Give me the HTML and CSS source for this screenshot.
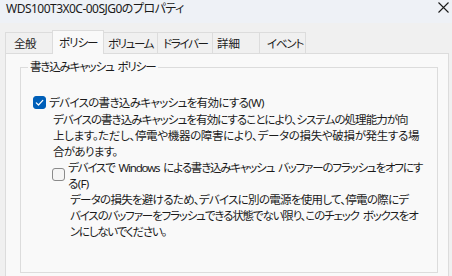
FILE: index.html
```html
<!DOCTYPE html>
<html lang="ja">
<head>
<meta charset="utf-8">
<link rel="stylesheet" href="styles.css">
</head>
<body>
<div class="window">
  <div class="titlebar">
    <span class="title">WDS100T3X0C-00SJG0のプロパティ</span>
    <svg class="close" width="11" height="11" viewBox="0 0 11 11"><path d="M0.5 0.5L10.5 10.5M10.5 0.5L0.5 10.5" stroke="#1a1a1a" stroke-width="1.1" fill="none"/></svg>
  </div>
  <div class="body">
    <div class="tabs">
      <div class="tab t1">全般</div>
      <div class="tab t2 active">ポリシー</div>
      <div class="tab t3">ボリューム</div>
      <div class="tab t4">ドライバー</div>
      <div class="tab t5">詳細</div>
      <div class="tab t6">イベント</div>
    </div>
    <div class="panel">
      <fieldset class="group">
        <legend>書き込みキャッシュ ポリシー</legend>
        <div class="row row1">
          <span class="cb checked"><svg width="13" height="13" viewBox="0 0 13 13"><path d="M3.3 6.8L5.5 9L9.8 4.4" stroke="#fff" stroke-width="1.2" fill="none" stroke-linecap="round" stroke-linejoin="round"/></svg></span>
          <span class="label"><span class="ln">デバイスの書き込みキャッシュを有効にする(W)</span></span>
        </div>
        <p class="desc desc1"><span class="ln d1l1">デバイスの書き込みキャッシュを有効にすることにより、システムの処理能力が向</span><span class="ln d1l2">上します。ただし、停電や機器の障害により、データの損失や破損が発生する場</span><span class="ln">合があります。</span></p>
        <div class="row row2">
          <span class="cb"></span>
          <span class="label"><span class="ln l2l1">デバイスで Windows による書き込みキャッシュ バッファーのフラッシュをオフにす</span><span class="ln">る(F)</span></span>
        </div>
        <p class="desc desc2"><span class="ln d2l1">データの損失を避けるため、デバイスに別の電源を使用して、停電の際にデ</span><span class="ln d2l2">バイスのバッファーをフラッシュできる状態でない限り、このチェック ボックスをオ</span><span class="ln d2l3">ンにしないでください。</span></p>
      </fieldset>
    </div>
  </div>
</div>
</body>
</html>
```
FILE: styles.css
```css
html, body {
  margin: 0;
  padding: 0;
  height: 100%;
  overflow: hidden;
}
body {
  font-family: "Noto Sans", "Noto Sans CJK JP", sans-serif;
  font-size: 12px;
  color: #1b1b1b;
  background: #f0f0f0;
}
.window {
  display: flex;
  flex-direction: column;
  height: 100%;
}
.titlebar {
  height: 23px;
  flex: none;
  background: #eef1f6;
  display: flex;
  align-items: flex-start;
  justify-content: space-between;
  padding: 0 3px 0 6px;
}
.title {
  line-height: 18px;
  font-size: 12px;
  letter-spacing: -0.52px;
  color: #1a1a1a;
  font-feature-settings: "palt";
}
.close {
  margin-top: 2px;
}
.body {
  flex: 1;
  display: flex;
  flex-direction: column;
  padding: 8px 3px 0 5px;
  background: #f0f0f0;
}
.tabs {
  display: flex;
  align-items: flex-end;
  height: 22px;
}
.tab {
  height: 21px;
  line-height: 21px;
  box-sizing: border-box;
  border: 1px solid #dcdcdc;
  border-bottom: none;
  margin-right: -1px;
  background: #f0f0f0;
  text-align: left;
  white-space: nowrap;
  font-size: 11.5px;
  letter-spacing: -0.6px;
  font-feature-settings: "palt";
  font-family: "Noto Sans CJK JP", sans-serif;
  color: #1b1b1b;
}
.tab.active {
  line-height: 22px;
  background: #f9f9f9;
  position: relative;
  z-index: 1;
  margin-bottom: -1px;
  height: 24px;
}
.t1 { width: 48px; padding-left: 8px; }
.t2 { width: 52px; padding-left: 6px; letter-spacing: -1px; }
.t3 { width: 55px; padding-left: 4px; letter-spacing: -1.4px; }
.t4 { width: 56px; padding-left: 5px; letter-spacing: -1.3px; }
.t5 { width: 48px; padding-left: 4px; letter-spacing: 0; }
.t6 { width: 47px; padding-left: 7px; letter-spacing: -1.2px; }
.panel {
  flex: 1;
  background: #f9f9f9;
  border: 1px solid #dcdcdc;
  border-bottom: none;
  padding: 6px 10px 0 14px;
}
.group {
  margin: 0;
  border: 1px solid #dcdcdc;
  padding: 0 0 0 12px;
  height: 213px;
  box-sizing: border-box;
  font-family: "Noto Sans", "Noto Sans CJK JP", sans-serif;
  font-size: 11.5px;
  letter-spacing: -0.65px;
  font-feature-settings: "palt";
}
.group legend {
  margin-left: -5px;
  padding: 0 3px 0 2px;
  line-height: 14px;
  letter-spacing: -1.14px;
  word-spacing: 2px;
}
.row {
  display: flex;
  align-items: flex-start;
  line-height: 16px;
}
.row1 {
  margin-top: 21px;
}
.row1 .cb {
  margin-top: 1px;
  margin-right: 3px;
}
.row2 {
  margin-left: 19px;
}
.row2 .cb {
  margin-top: 8px;
  margin-right: 3px;
}
.cb {
  flex: none;
  width: 13px;
  height: 13px;
  box-sizing: border-box;
  border-radius: 3px;
  border: 1px solid #8a8a8a;
  background: #f5f5f5;
  display: flex;
}
.cb.checked {
  background: #005fb8;
  border-color: #005fb8;
}
.cb.checked svg {
  margin: -1px;
}
.label {
  white-space: nowrap;
}
.ln {
  display: block;
  white-space: nowrap;
}
.d1l1 { letter-spacing: -0.95px; }
.d1l2 { letter-spacing: -0.33px; }
.l2l1 { letter-spacing: -1.16px; word-spacing: 2px; }
.d2l1 { letter-spacing: -0.71px; }
.d2l2 { letter-spacing: -1.13px; word-spacing: 2px; }
.d2l3 { letter-spacing: -1.25px; }
.desc {
  margin: 1px 0 0 20px;
  line-height: 16px;
}
.desc2 {
  margin: 0 0 0 37px;
}
```
